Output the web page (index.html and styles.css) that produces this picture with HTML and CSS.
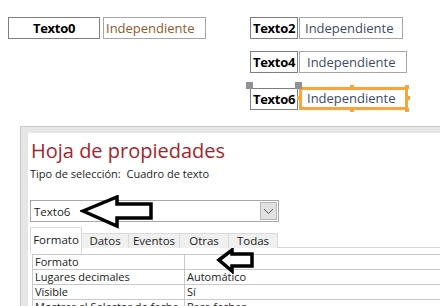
FILE: index.html
```html
<!DOCTYPE html>
<html lang="es">
<head>
<meta charset="utf-8">
<link rel="stylesheet" href="styles.css">
</head>
<body>
<div class="canvas">
  <div class="ctl label lbl0">Texto0</div>
  <div class="ctl box box0 brown">Independiente</div>
  <div class="ctl label lbl2">Texto2</div>
  <div class="ctl box box2">Independiente</div>
  <div class="ctl label lbl4">Texto4</div>
  <div class="ctl box box4">Independiente</div>
  <div class="ctl label lbl6">Texto6</div>
  <div class="ctl box box6 selected">Independiente</div>
  <span class="grip g1"></span>
  <span class="grip g2"></span>
  <span class="oh h-tm"></span>
  <span class="oh h-tr"></span>
  <span class="oh h-rm"></span>
  <span class="oh h-br"></span>
  <span class="oh h-bm"></span>
  <span class="oh h-lm"></span>
</div>
<div class="sheet">
  <div class="inner">
    <h1 class="title">Hoja de propiedades</h1>
    <div class="seltype">Tipo de selección:&nbsp; Cuadro de texto</div>
    <div class="combo">
      <span class="combo-text">Texto6</span>
      <span class="combo-btn"><svg width="11" height="7" viewBox="0 0 11 7"><path d="M1 1 L5.5 5.5 L10 1" fill="none" stroke="#555" stroke-width="1"/></svg></span>
    </div>
    <div class="tabs">
      <div class="tab active t-formato">Formato</div>
      <div class="tab t-datos">Datos</div>
      <div class="tab t-eventos">Eventos</div>
      <div class="tab t-otras">Otras</div>
      <div class="tab t-todas">Todas</div>
      <div class="tab-rest"></div>
    </div>
    <div class="props">
      <div class="row"><div class="k">Formato</div><div class="v"></div></div>
      <div class="row"><div class="k">Lugares decimales</div><div class="v">Automático</div></div>
      <div class="row"><div class="k">Visible</div><div class="v">Sí</div></div>
      <div class="row"><div class="k">Mostrar el Selector de fecha</div><div class="v">Para fechas</div></div>
    </div>
  </div>
</div>
<svg class="arrow a1" width="76" height="34" viewBox="0 0 76 34">
  <path d="M3 16 L37 2 L37 9 L71 9 L71 23 L37 23 L37 31 Z" fill="#fff" stroke="#000" stroke-width="3.5" stroke-linejoin="miter"/>
</svg>
<svg class="arrow a2" width="40" height="26" viewBox="0 0 40 26">
  <path d="M3 12 L16 2 L16 6 L36 6 L36 18 L16 18 L16 23 Z" fill="#fff" stroke="#000" stroke-width="3.5" stroke-linejoin="miter"/>
</svg>
</body>
</html>
```
FILE: styles.css
```css
* { box-sizing: border-box; }
html, body { margin: 0; padding: 0; background: #fff; overflow: hidden; }
body {
  width: 440px; height: 306px; position: relative;
  font-family: "Open Sans", "Noto Sans", sans-serif;
  color: #222;
}
.canvas { position: relative; height: 126px; }
.ctl {
  position: absolute; height: 22px; line-height: 20px; font-size: 13px;
  white-space: nowrap; overflow: hidden; background: #fff;
}
.label {
  border: 1px solid #7f7f7f; font-weight: 700; color: #000;
  text-align: center; letter-spacing: -0.3px;
}
.box { border: 1px solid #a6a6a6; color: #3e4b66; padding-left: 5px; }
.brown { color: #93582b; padding-left: 2px; }
.lbl0 { left: 8px; top: 17px; width: 92px; }
.box0 { left: 103px; top: 17px; width: 103px; }
.lbl2 { left: 250px; top: 17px; width: 48px; }
.box2 { left: 299px; top: 17px; width: 104px; }
.lbl4 { left: 250px; top: 51px; width: 48px; }
.box4 { left: 299px; top: 51px; width: 108px; padding-left: 7px; }
.lbl6 { left: 250px; top: 88px; width: 48px; }
.box6 { left: 299px; top: 87px; width: 109px; height: 23px; line-height: 17px; }
.selected { border: 3px solid #f9a53e; padding-left: 5px; }
.grip { position: absolute; width: 7px; height: 7px; background: #8e9093; top: 82px; }
.g1 { left: 246px; }
.g2 { left: 295px; }
.oh { position: absolute; width: 4px; height: 4px; background: #f9a53e; }
.h-tm { left: 350px; top: 85px; }
.h-tr { left: 405px; top: 85px; }
.h-rm { left: 406px; top: 96px; }
.h-br { left: 405px; top: 108px; }
.h-bm { left: 350px; top: 108px; }
.h-lm { left: 297px; top: 96px; }

.sheet {
  margin-left: 20px; height: 180px;
  border-top: 1px solid #c9c9c9; border-left: 1px solid #c9c9c9;
  background: #e6e6e6; padding: 6px 0 0 7px;
}
.inner { background: #fff; height: 100%; padding: 4px 0 0 2px; }
.title {
  margin: 0 0 0 1px; font-family: "Open Sans", sans-serif; font-weight: 400;
  font-size: 20px; line-height: 28px; color: #a4262c;
}
.seltype { font-size: 11px; line-height: 14px; color: #222; margin-top: 2px; }
.combo {
  margin-top: 19px; width: 249px; height: 22px; border: 1px solid #a8a8a8;
  display: flex; align-items: center; justify-content: space-between;
  padding: 0 1px 0 3px; font-size: 11.5px;
}
.combo-btn {
  width: 17px; height: 18px; background: #e1e1e1; border: 1px solid #b5b5b5;
  display: flex; align-items: center; justify-content: center;
}
.tabs { display: flex; align-items: flex-end; margin-top: 5px; height: 27px; }
.tab {
  height: 15px; font-size: 11.5px; line-height: 13px; text-align: center;
  background: #f0f0f0; border: 1px solid #dadada; border-left: none; border-bottom: none;
  margin-bottom: 6px; color: #222;
}
.tab.active {
  height: 27px; margin-bottom: 0; background: #fff; border-left: 1px solid #dadada;
  padding-top: 4px; line-height: 15px;
}
.t-formato { width: 52px; }
.t-datos { width: 47px; }
.t-eventos { width: 51px; }
.t-otras { width: 49px; }
.t-todas { width: 49px; }
.tab-rest { flex: 1; border-bottom: 1px solid #d4d4d4; margin-bottom: 6px; }
.props { margin-left: 2px; border-top: 1px solid #c9c9c9; border-left: 1px solid #c9c9c9; }
.row { display: flex; height: 15px; border-bottom: 1px solid #c9c9c9; font-size: 11px; line-height: 14px; }
.k { width: 152px; padding-left: 2px; border-right: 1px solid #c9c9c9; white-space: nowrap; overflow: hidden; }
.v { flex: 1; padding-left: 2px; white-space: nowrap; }
.arrow { position: absolute; }
.a1 { left: 80px; top: 195px; }
.a2 { left: 216px; top: 248px; }
```
